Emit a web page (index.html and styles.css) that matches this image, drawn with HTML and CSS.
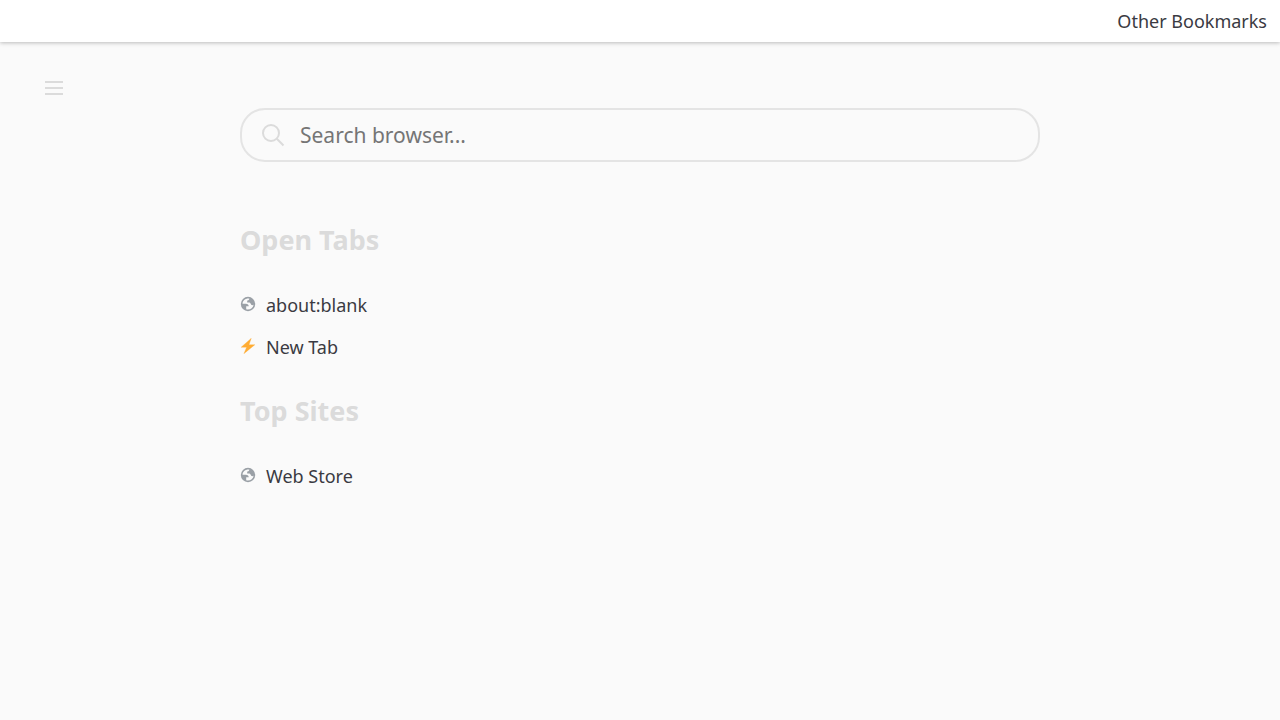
FILE: index.html
```html
<!DOCTYPE html>
<html lang="en">
<head>
<meta charset="utf-8">
<title>New Tab</title>
<link rel="stylesheet" href="styles.css">
</head>
<body>
<header class="bookmarks"><a class="bookmark">Other Bookmarks</a></header>
<div class="page">
<aside class="side"><svg class="menu" viewBox="0 0 18 14"><path d="M0 1h18M0 7h18M0 13h18"/></svg></aside>
<main class="content">
<div class="search">
<svg class="search-icon" viewBox="0 0 24 24"><circle cx="10" cy="10" r="8"/><path d="M15.800 15.800l6.700 6.700"/></svg>
<input class="search-input" type="text" placeholder="Search browser...">
</div>
<section class="group"><h2 class="title">Open Tabs</h2>
<ul class="list">
<li class="item"><svg class="icon" viewBox="0 0 16 16"><circle cx="8" cy="8" r="7.200" fill="#9aa0a6"/><path d="M9.300 2.600C5.800 2 2.800 4.300 2.500 7.700h3.300c2 0 2.900.8 2.900 2.600H6.200v3c3.500 1 6.900-1.200 7.400-4.600-.8.600-1.700.6-2.400.1C10.600 7 10 6.500 8.500 6.500H7.200V4.600c1.200 0 2-.6 2.100-2z" fill="#fafafa"/></svg><span>about:blank</span></li>
<li class="item"><svg class="icon" viewBox="0 0 16 16"><path d="M11.300 .2L1.100 9.300h5.500L3.900 15.700 14.900 6.700H9z" fill="#ffac33" stroke="#ffac33" stroke-width=".3"/></svg><span>New Tab</span></li>
</ul></section>
<section class="group"><h2 class="title">Top Sites</h2>
<ul class="list">
<li class="item"><svg class="icon" viewBox="0 0 16 16"><circle cx="8" cy="8" r="7.200" fill="#9aa0a6"/><path d="M9.300 2.600C5.800 2 2.800 4.300 2.500 7.700h3.300c2 0 2.900.8 2.900 2.600H6.200v3c3.500 1 6.900-1.200 7.400-4.600-.8.600-1.700.6-2.400.1C10.600 7 10 6.500 8.500 6.500H7.200V4.600c1.200 0 2-.6 2.100-2z" fill="#fafafa"/></svg><span>Web Store</span></li>
</ul></section>
</main>
</div>
</body>
</html>
```
FILE: styles.css
```css
* { box-sizing: border-box; }
body { margin: 0; background: #fafafa; color: #3a3a42; font: 18px/25px "Noto Sans", sans-serif; }
.bookmarks { display: flex; justify-content: flex-end; height: 42px; padding: 9px 13px 0; background: #fff; box-shadow: 0 1px 4px rgba(0,0,0,.25); }
.page { display: grid; grid-template-columns: 240px 800px; }
.side { padding: 39px 0 0 45px; }
.menu { display: block; width: 18px; height: 14px; fill: none; stroke: #dbdbdb; stroke-width: 2; }
.content { padding-top: 66px; }
.search { display: flex; align-items: center; height: 54px; padding-left: 19px; border: 2px solid #e4e4e4; border-radius: 25px; }
.search-icon { width: 24px; height: 24px; fill: none; stroke: #dbdbdb; stroke-width: 2; }
.search-input { flex: 1; min-width: 0; height: 50px; margin-left: 15px; padding: 0 0 1px; border: 0; outline: 0; background: transparent; font: 21px "Noto Sans", sans-serif; }
.search-input::placeholder { color: #757575; }
.group { padding-top: 24px; }
.search + .group { padding-top: 59px; }
.title { margin: 0; font-size: 27px; line-height: 37px; color: #dbdbdb; }
.list { margin: 0; padding: 26px 0 0; list-style: none; }
.item { display: flex; height: 42px; padding-top: 9px; line-height: 25px; }
.icon { width: 16px; height: 16px; margin: 3px 10px 0 0; }
```
